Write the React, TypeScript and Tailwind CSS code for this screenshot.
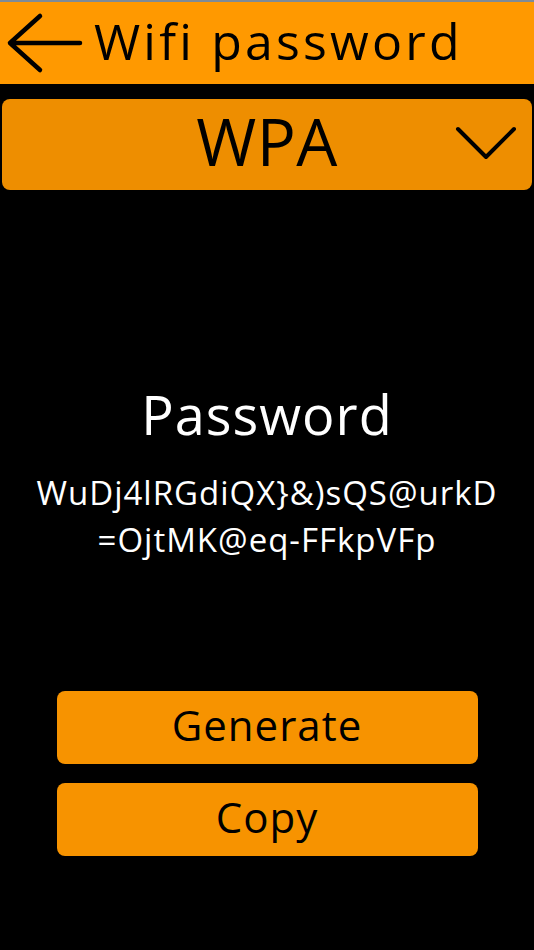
import { useState } from "react";

const PASSWORD_LINES = ["WuDj4lRGdiQX}&)sQS@urkD", "=OjtMK@eq-FFkpVFp"];

export default function App() {
  const [mode] = useState("WPA");

  return (
    <div
      className="w-[534px] h-[950px] bg-black flex flex-col overflow-hidden"
      style={{ fontFamily: '"Open Sans", "Noto Sans", sans-serif' }}
    >
      <div className="h-[2px] bg-[#7d8b98]" />

      {/* header */}
      <div className="h-[82px] bg-[#ff9900] flex items-center">
        <svg width="78" height="62" viewBox="0 0 78 62" className="ml-[6px] shrink-0">
          <path
            d="M34 4 L4 31 L34 58 M4 31 L74 31"
            fill="none"
            stroke="black"
            strokeWidth="4.5"
            strokeLinecap="round"
            strokeLinejoin="round"
          />
        </svg>
        <span className="ml-[10px] text-[50px] leading-none text-black tracking-[3.2px] -mt-[4px]">
          Wifi password
        </span>
      </div>

      {/* dropdown */}
      <div className="mt-[15px] mx-[2px] h-[91px] bg-[#ee8e00] rounded-[8px] relative flex items-center justify-center">
        <span className="text-[65px] leading-none text-black tracking-[0.5px] -mt-[6px]">{mode}</span>
        <svg width="64" height="40" viewBox="0 0 64 40" className="absolute right-[14px] top-[24px]">
          <path
            d="M4 6 L32 34 L60 6"
            fill="none"
            stroke="black"
            strokeWidth="4"
            strokeLinecap="round"
            strokeLinejoin="round"
          />
        </svg>
      </div>

      {/* password */}
      <div className="mt-[197px] flex flex-col items-center text-white">
        <span className="text-[54px] leading-none tracking-[1px]">Password</span>
        <div className="mt-[28px] text-center text-[33px] leading-[47px] tracking-[1px]">
          {PASSWORD_LINES.map((line) => (
            <div key={line}>{line}</div>
          ))}
        </div>
      </div>

      {/* buttons */}
      <div className="mt-[128px] flex flex-col items-center gap-[19px]">
        <button className="w-[421px] h-[73px] bg-[#f79300] rounded-[8px] text-black text-[42px] leading-none tracking-[1px] pb-[6px]">
          Generate
        </button>
        <button className="w-[421px] h-[73px] bg-[#f79300] rounded-[8px] text-black text-[42px] leading-none tracking-[1px] pb-[6px]">
          Copy
        </button>
      </div>
    </div>
  );
}
